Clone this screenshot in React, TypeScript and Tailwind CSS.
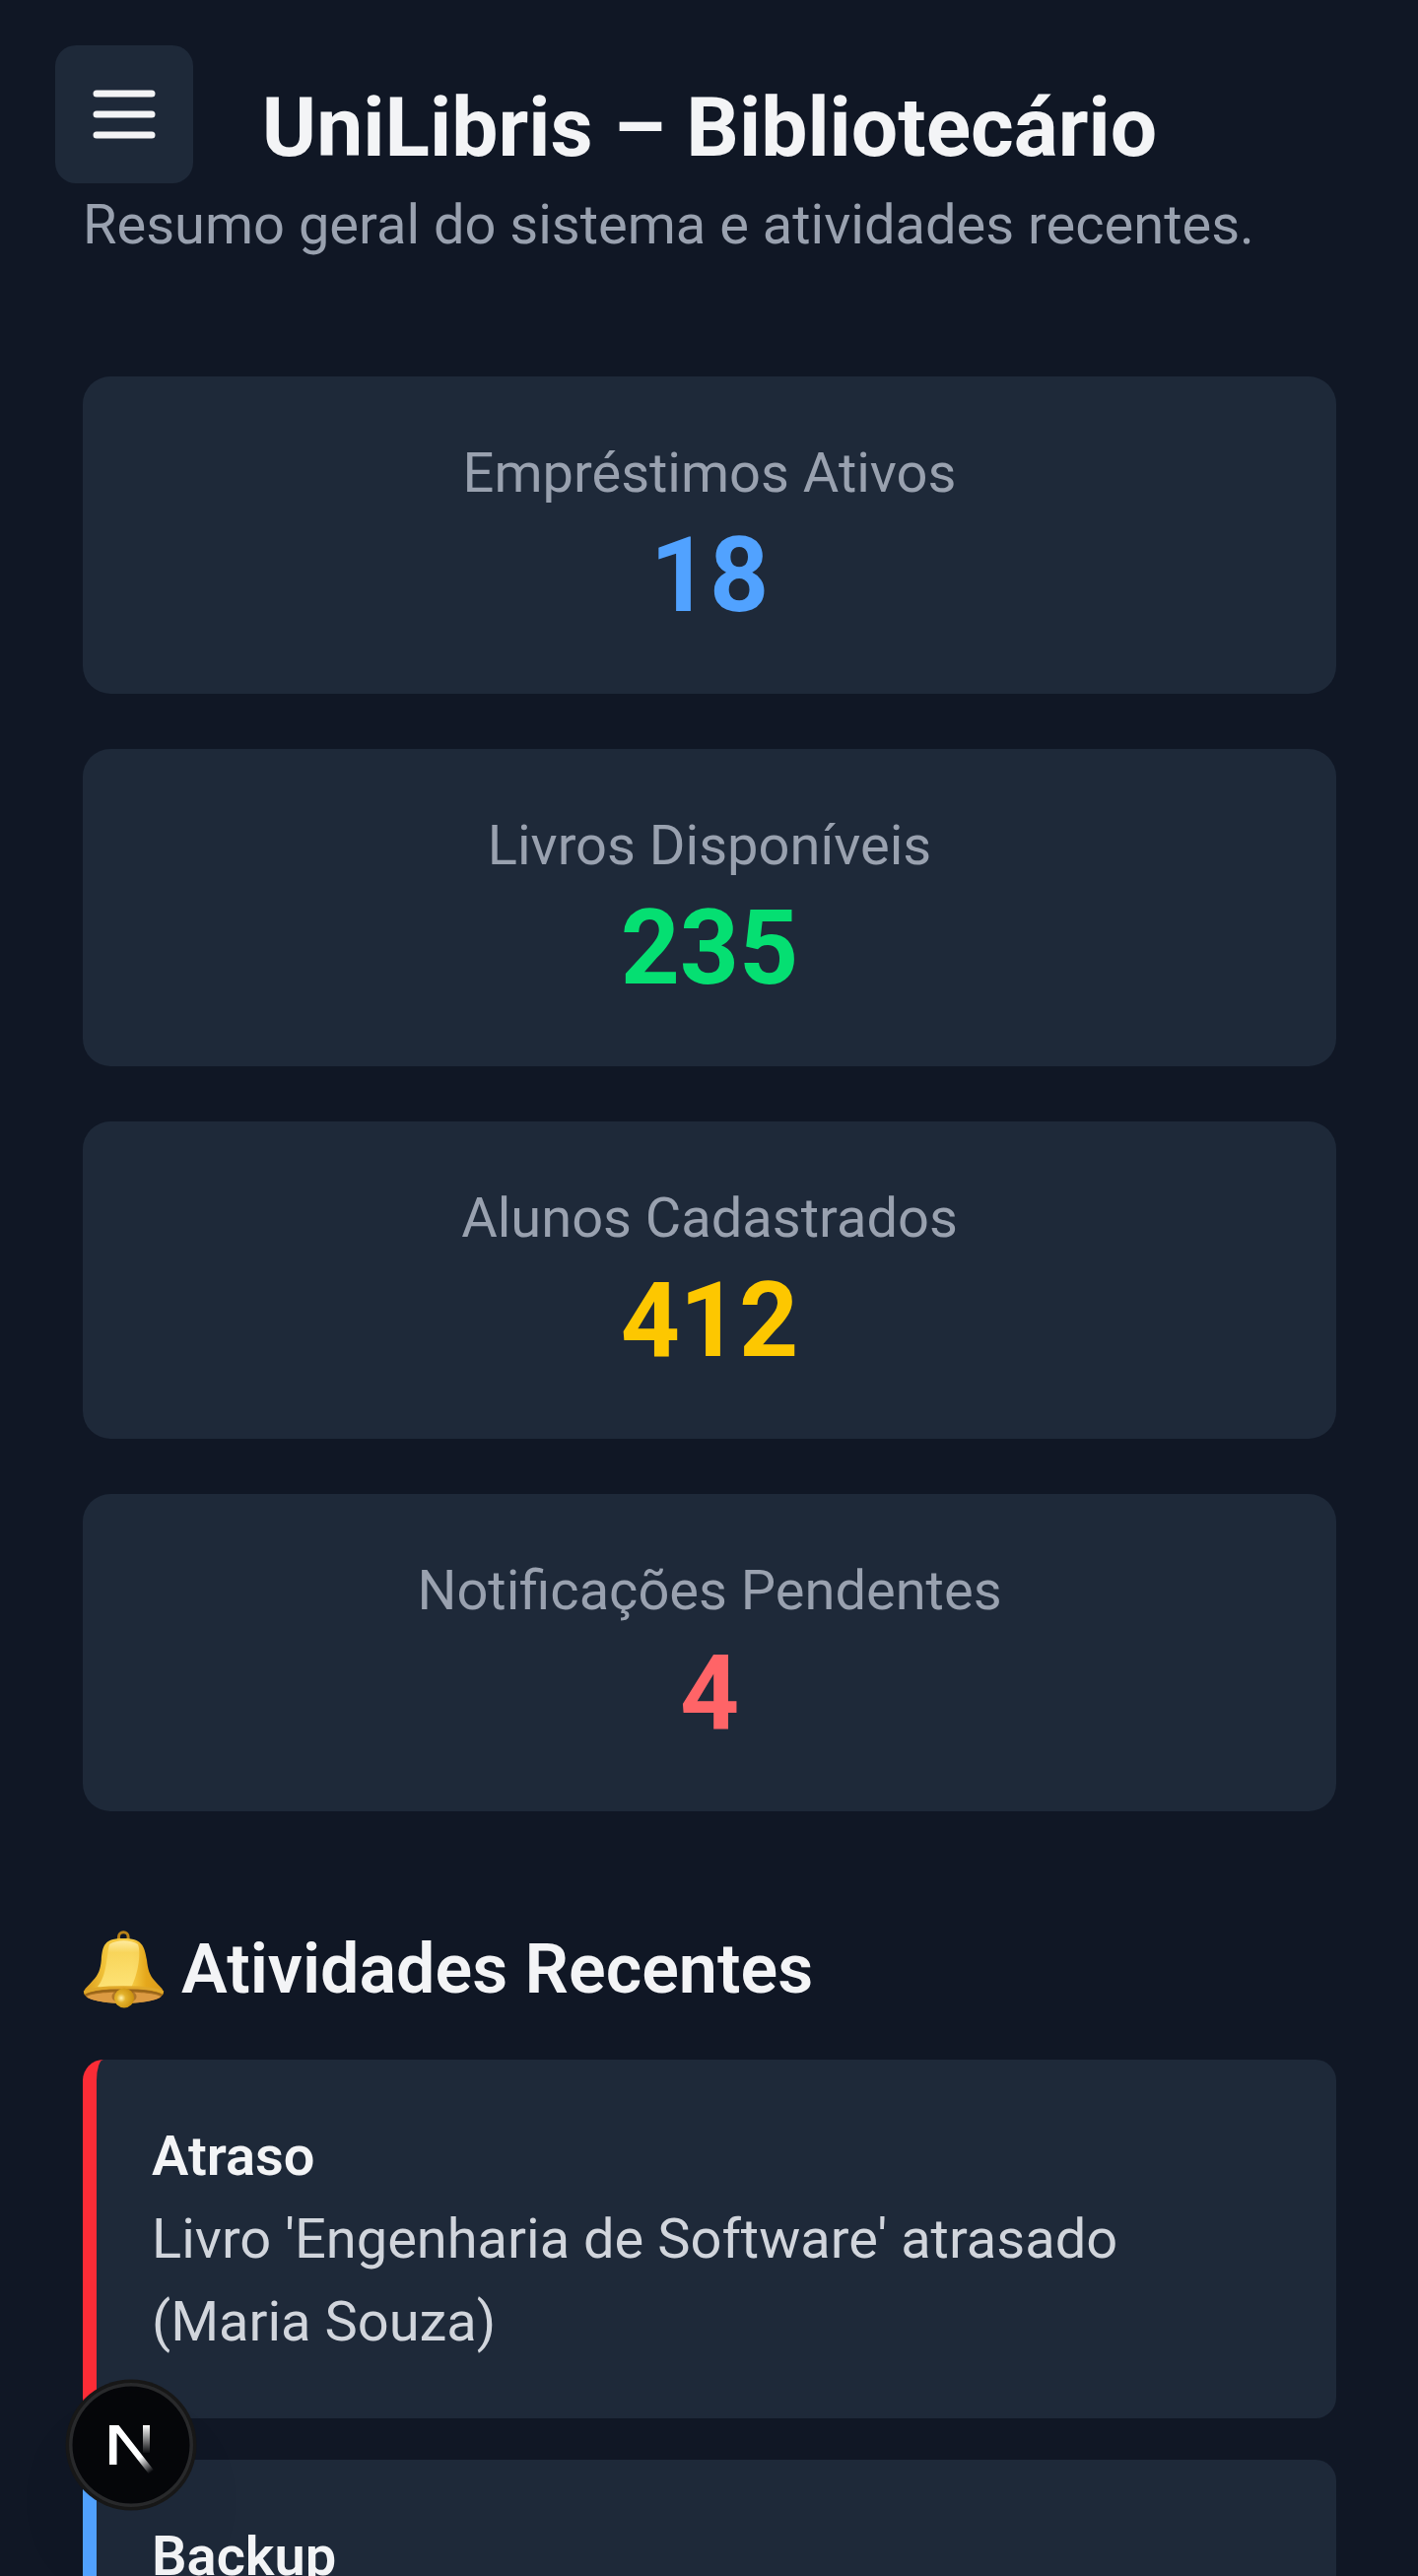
const stats = [
  { label: "Empréstimos Ativos", value: "18", color: "text-[#51a2ff]" },
  { label: "Livros Disponíveis", value: "235", color: "text-[#05df72]" },
  { label: "Alunos Cadastrados", value: "412", color: "text-[#fdc700]" },
  { label: "Notificações Pendentes", value: "4", color: "text-[#ff6467]" },
];

const activities = [
  { title: "Atraso", text: "Livro 'Engenharia de Software' atrasado (Maria Souza)", border: "border-[#fb2c36]" },
  { title: "Backup", text: "", border: "border-[#51a2ff]" },
];

function Bell() {
  return (
    <svg className="mt-[10px] h-[80px] w-[84px] shrink-0" viewBox="0 0 84 80">
      <defs>
        <linearGradient id="bellBody" x1="0" x2="1" y1="0" y2="0">
          <stop offset="0" stopColor="#d99a1a" />
          <stop offset=".28" stopColor="#f3c63c" />
          <stop offset=".6" stopColor="#f6cc45" />
          <stop offset=".78" stopColor="#e5a81c" />
          <stop offset="1" stopColor="#d9991a" />
        </linearGradient>
        <linearGradient id="bellShine" x1="0" x2="0" y1="0" y2="1">
          <stop offset="0" stopColor="#fff0ae" />
          <stop offset=".25" stopColor="#f9d75f" />
          <stop offset="1" stopColor="#ffe880" />
        </linearGradient>
        <radialGradient id="bellClapper" cx=".35" cy=".5" r=".65">
          <stop offset="0" stopColor="#fff3b0" />
          <stop offset=".35" stopColor="#e3b22c" />
          <stop offset="1" stopColor="#c9900e" />
        </radialGradient>
      </defs>
      <path d="M36.500 10V6.500a4.800 4.800 0 0 1 9.600 0V10" fill="none" stroke="#b98318" strokeWidth="3" />
      <path d="M1 63c0-4 5-7 9-12 6-6 8-12 8.800-21C20 15 22 8 41 8S62.500 15 65 30c1 9 2.500 15 8 21 4 5 9 8 9 12 0 6-20 11-41 11S1 69 1 63z" fill="url(#bellBody)" />
      <path d="M27 14c8-5 21-5 29 0 3 8 1 28-7 44-9 2-24 2-34-1 10-12 9-32 12-43z" fill="url(#bellShine)" opacity=".85" />
      <ellipse cx="41.500" cy="66" rx="38.500" ry="7.500" fill="#a96f20" />
      <path d="M4 67c8-6 67-6 75 0-3 4-18 6.500-37.500 6.500S7 71 4 67z" fill="#dc9a42" />
      <path d="M1.500 63c10-7 70-7 80 0" fill="none" stroke="#e0a829" strokeWidth="3" />
      <path d="M2 65.500c12-6.500 67-6.500 79 0" fill="none" stroke="#946316" strokeWidth="1.200" />
      <ellipse cx="42" cy="67" rx="12.500" ry="7" fill="#8a5a12" opacity=".55" />
      <circle cx="42" cy="68.500" r="10" fill="url(#bellClapper)" />
    </svg>
  );
}

export default function App() {
  return (
    <div className="relative h-[2614px] w-[1439px] overflow-hidden bg-[#101725] px-[84px] pt-[74px] font-['Roboto',sans-serif] text-[56px] leading-[84px] text-[#f3f4f6]">
      <header className="w-[1272px]">
        <h1 className="text-center text-[84px] leading-[112px] font-bold whitespace-nowrap">UniLibris – Bibliotecário</h1>
        <p className="whitespace-nowrap text-[#99a1af]">Resumo geral do sistema e atividades recentes.</p>
      </header>

      <section className="mt-28 grid w-[1272px] gap-14">
        {stats.map((s) => (
          <div key={s.label} className="rounded-[28px] bg-[#1e2939] p-14 text-center">
            <p className="text-[#99a1af]">{s.label}</p>
            <p className={`text-[105px] leading-[126px] font-bold ${s.color}`}>{s.value}</p>
          </div>
        ))}
      </section>

      <section className="mt-[111px]">
        <h2 className="flex h-[98px] gap-[16px] text-[70px] leading-[98px] font-semibold">
          <Bell />
          Atividades Recentes
        </h2>
        <ul className="mt-[43px] flex w-[1272px] flex-col gap-[42px]">
          {activities.map((a) => (
            <li key={a.title} className={`min-h-[364px] rounded-[21px] border-l-[14px] bg-[#1e2939] p-14 ${a.border}`}>
              <p className="font-semibold">{a.title}</p>
              {a.text && <p className="text-[#d1d5dc]">{a.text}</p>}
            </li>
          ))}
        </ul>
      </section>

      <button className="absolute top-[46px] left-14 flex size-[140px] items-center justify-center rounded-[21px] bg-[#1e2939]" aria-label="Menu">
        <svg className="size-[84px]" viewBox="0 0 24 24" fill="none" stroke="currentColor" strokeWidth="2" strokeLinecap="round">
          <path d="M4 6h16M4 12h16M4 18h16" />
        </svg>
      </button>

      <div className="absolute top-[2418px] left-[70px] flex size-[126px] items-center justify-center rounded-full bg-[#050609] shadow-[0_0_0_3.5px_#171717,inset_0_0_0_3.5px_rgba(255,255,255,0.14),0_56px_112px_-28px_rgba(0,0,0,0.1)]">
        <svg className="size-[126px]" viewBox="0 0 126 126" fill="none">
          <defs>
            <linearGradient id="nStem" x1="0" x2="0" y1="43" y2="72" gradientUnits="userSpaceOnUse">
              <stop stopColor="#fff" />
              <stop offset="1" stopColor="#fff" stopOpacity="0" />
            </linearGradient>
            <linearGradient id="nDiagonal" x1="72" x2="83" y1="76" y2="91" gradientUnits="userSpaceOnUse">
              <stop stopColor="#fff" />
              <stop offset="1" stopColor="#fff" stopOpacity="0" />
            </linearGradient>
          </defs>
          <path d="M75 43h7v28h-7z" fill="url(#nStem)" />
          <path d="M41 83V43h9.500L86 88.500 81 92.500 48.500 51v32z" fill="url(#nDiagonal)" />
        </svg>
      </div>
    </div>
  );
}
